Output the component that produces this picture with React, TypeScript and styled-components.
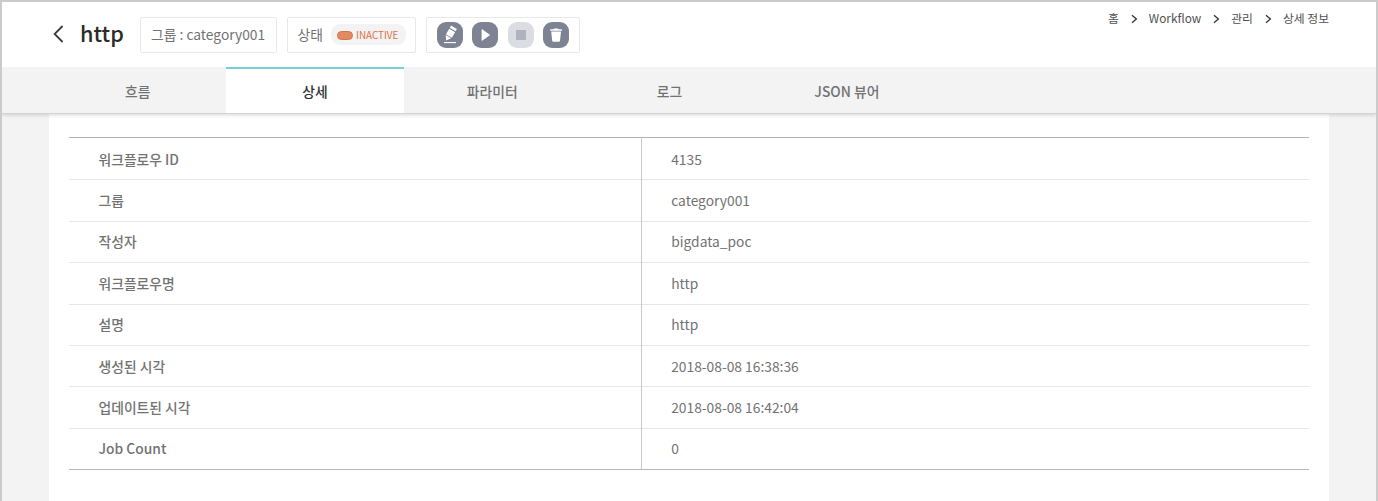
import React from "react";
import styled, { createGlobalStyle } from "styled-components";

const GlobalStyle = createGlobalStyle`
  *, *::before, *::after { box-sizing: border-box; }
  body { margin: 0; background: #fff; overflow: hidden; }
  body, button { font-family: "Noto Sans CJK KR", "Noto Sans", sans-serif; }
`;

const Page = styled.div`
  display: flex;
  flex-direction: column;
  height: 501px;
  border: 2px solid #cbcbcb;
  border-bottom: 0;
  background: #f3f3f3;
  color: #727272;
`;

const Header = styled.header`
  display: flex;
  align-items: flex-start;
  flex: 0 0 65px;
  padding: 15px 47px 0 50px;
  background: #fff;
`;

const BackButton = styled.button`
  display: flex;
  align-items: center;
  width: 13px;
  height: 34px;
  padding: 0;
  border: 0;
  background: none;
`;

const Title = styled.h1`
  width: 60px;
  margin: 0 0 0 15px;
  font-size: 21.7px;
  font-weight: 500;
  line-height: 31px;
  color: #2b2b2b;
`;

const InfoBox = styled.div<{ $width: number }>`
  display: flex;
  align-items: center;
  width: ${(p) => p.$width}px;
  height: 36px;
  margin-right: 10px;
  padding: 0 0 1px 10px;
  border: 1px solid #e8e8e8;
  border-radius: 2px;
  font-size: 13.8px;
  line-height: 19px;
  white-space: nowrap;
`;

const ActionGroup = styled(InfoBox)`
  gap: 9.4px;
  padding-left: 9.6px;
`;

const StatusBadge = styled.span`
  display: flex;
  align-items: center;
  gap: 3px;
  width: 75px;
  height: 21px;
  margin-left: 8px;
  padding: 1px 0 0 6px;
  border-radius: 9px;
  background: #f3f3f3;
  font-size: 9.9px;
  color: #dc7143;
`;

const StatusDot = styled.i`
  width: 16px;
  height: 9px;
  border: 1px solid #d3754b;
  border-radius: 5px;
  background: #e38a62;
`;

const ActionButton = styled.button<{ $disabled?: boolean }>`
  display: flex;
  flex: none;
  width: 26px;
  height: 26px;
  padding: 0;
  border: 0;
  border-radius: 9px;
  background: ${(p) => (p.$disabled ? "#dcdde3" : "#7e8393")};
`;

const Breadcrumb = styled.nav`
  display: flex;
  align-items: center;
  margin-left: auto;
  margin-top: -8px;
  font-size: 11.8px;
  line-height: 18px;
  color: #505050;
  white-space: nowrap;

  svg { margin: 1px 11px 0 12px; }
`;

const Tabs = styled.nav`
  display: flex;
  flex: 0 0 46px;
  padding-left: 47px;
  background: #f3f3f3;
  box-shadow: 0 0 0 1px #d3d3d3, 0 2px 4px rgba(0, 0, 0, 0.16);
  clip-path: inset(0 0 -8px 0);
  z-index: 1;
`;

const Tab = styled.button<{ $active?: boolean }>`
  width: 177.3px;
  padding: 0;
  border: 0;
  border-top: 2px solid ${(p) => (p.$active ? "#77d0d5" : "transparent")};
  background: ${(p) => (p.$active ? "#fff" : "transparent")};
  font-size: 13.8px;
  font-weight: 500;
  color: ${(p) => (p.$active ? "#303030" : "#727272")};
`;

const Panel = styled.main`
  flex: 1;
  margin: 0 47px;
  padding: 24px 20px 0;
  background: #fff;
`;

const Details = styled.dl`
  display: flex;
  flex-direction: column;
  height: 333px;
  margin: 0;
  border-top: 1px solid #b3b3b3;
  border-bottom: 1px solid #b9b9b9;
`;

const Row = styled.div`
  display: grid;
  grid-template-columns: 573px 1fr;
  flex: 1;
  font-size: 13.8px;
  line-height: 20px;
`;

const Label = styled.dt`
  display: flex;
  align-items: center;
  padding-left: 29.5px;
  border-right: 1px solid #cacaca;
  font-weight: 500;

  ${Row} + ${Row} & { box-shadow: inset 0 1px #e6e6e6; }
`;

const Value = styled.dd`
  display: flex;
  align-items: center;
  margin: 0;
  padding-left: 29.2px;

  ${Row} + ${Row} & { box-shadow: inset 0 1px #e6e6e6; }
`;

const Chevron = () => (
  <svg width="7" height="10" viewBox="0 0 7 10" fill="none" stroke="#333" strokeWidth="1.3">
    <path d="M1 1.2 5.4 5 1 8.8" />
  </svg>
);

const Edit = () => (
  <svg width="26" height="26" viewBox="0 0 26 26">
    <g fill="#fff" transform="rotate(31 13 12)">
      <path d="M9.6 4.2h6.8v2.6H9.6ZM9.6 7.8h6.8v6.4H9.6ZM9.8 15h6.4L13 19.6Z" />
    </g>
    <path d="M7 20.6h12" stroke="#fff" strokeWidth="1.1" />
  </svg>
);

const Play = () => (
  <svg width="26" height="26" viewBox="0 0 26 26">
    <path d="M10 7.6v10.8L17.6 13Z" fill="#fff" stroke="#fff" strokeWidth=".8" strokeLinejoin="round" />
  </svg>
);

const Stop = () => (
  <svg width="26" height="26" viewBox="0 0 26 26">
    <path d="M8 8h10v10H8Z" fill="#b0b2be" />
  </svg>
);

const Trash = () => (
  <svg width="26" height="26" viewBox="0 0 26 26" fill="#fff">
    <path d="M7.2 7.2h3.3l.8-.8h3.6l.8.8h3.2v1.5H7.2ZM8.2 9.6h9.8l-1 9.2q-.1 1-1 1h-5.8q-.9 0-1-1Z" />
  </svg>
);

const crumbs = ["홈", "Workflow", "관리", "상세 정보"];
const tabs = ["흐름", "상세", "파라미터", "로그", "JSON 뷰어"];
const details = [
  ["워크플로우 ID", "4135"],
  ["그룹", "category001"],
  ["작성자", "bigdata_poc"],
  ["워크플로우명", "http"],
  ["설명", "http"],
  ["생성된 시각", "2018-08-08 16:38:36"],
  ["업데이트된 시각", "2018-08-08 16:42:04"],
  ["Job Count", "0"],
];

export default function App() {
  return (
    <Page>
      <GlobalStyle />
      <Header>
        <BackButton aria-label="뒤로">
          <svg width="13" height="18" viewBox="0 0 13 18" fill="none" stroke="#3c3c3c" strokeWidth="1.8">
            <path d="M10.6 1 2.6 9l8 8" />
          </svg>
        </BackButton>
        <Title>http</Title>
        <InfoBox $width={136.6}>그룹 : category001</InfoBox>
        <InfoBox $width={129.8}>
          상태
          <StatusBadge><StatusDot />INACTIVE</StatusBadge>
        </InfoBox>
        <ActionGroup $width={153.4}>
          <ActionButton aria-label="편집"><Edit /></ActionButton>
          <ActionButton aria-label="실행"><Play /></ActionButton>
          <ActionButton aria-label="중지" $disabled><Stop /></ActionButton>
          <ActionButton aria-label="삭제"><Trash /></ActionButton>
        </ActionGroup>
        <Breadcrumb>
          {crumbs.map((name, i) => (
            <React.Fragment key={name}>
              {i > 0 && <Chevron />}
              {name}
            </React.Fragment>
          ))}
        </Breadcrumb>
      </Header>
      <Tabs>
        {tabs.map((name) => (
          <Tab key={name} $active={name === "상세"}>{name}</Tab>
        ))}
      </Tabs>
      <Panel>
        <Details>
          {details.map(([label, value]) => (
            <Row key={label}>
              <Label>{label}</Label>
              <Value>{value}</Value>
            </Row>
          ))}
        </Details>
      </Panel>
    </Page>
  );
}
